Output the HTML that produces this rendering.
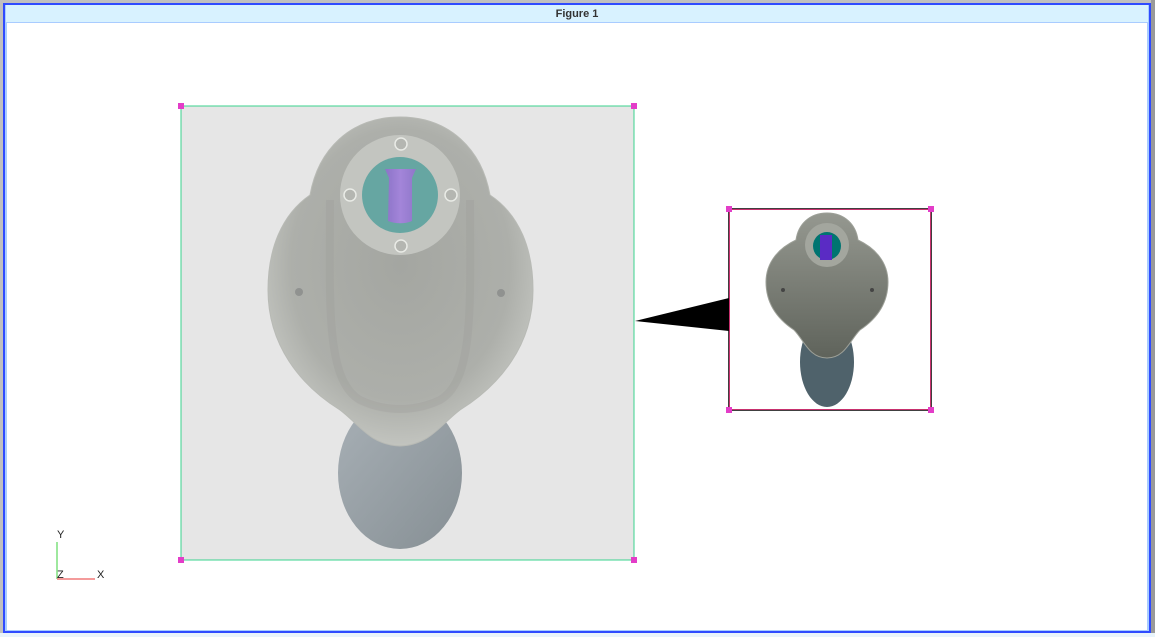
<!DOCTYPE html>
<html><head><meta charset="utf-8"><style>
html,body{margin:0;padding:0;width:1155px;height:637px;overflow:hidden;background:#c8c8c8}
svg{display:block}
text{font-family:"Liberation Sans",sans-serif}
</style></head><body>
<svg width="1155" height="637" viewBox="0 0 1155 637" xmlns="http://www.w3.org/2000/svg">
<defs>
<radialGradient id="body" cx="50%" cy="45%" r="55%">
<stop offset="0" stop-color="#a4a6a1"/><stop offset="0.75" stop-color="#adafaa"/><stop offset="1" stop-color="#c2c4bf"/></radialGradient>
<linearGradient id="fin" x1="0" y1="0" x2="1" y2="1"><stop offset="0" stop-color="#a8b0b6"/><stop offset="1" stop-color="#868f94"/></linearGradient>
<linearGradient id="pur" x1="0" x2="1"><stop offset="0" stop-color="#8b73c7"/><stop offset="0.5" stop-color="#a385d9"/><stop offset="1" stop-color="#8f77c9"/></linearGradient>
<linearGradient id="sb" x1="0" y1="0" x2="0" y2="1"><stop offset="0" stop-color="#959890"/><stop offset="1" stop-color="#5f635b"/></linearGradient>
</defs>
<rect x="0" y="0" width="1155" height="637" fill="#c0c0c0"/>
<rect x="3" y="3" width="1148" height="630" fill="#2f4bff"/>
<rect x="5" y="5" width="1144" height="626" fill="#a9ccff"/>
<rect x="6" y="5" width="1142" height="17" fill="#d8f2ff"/>
<rect x="6" y="22" width="1142" height="1" fill="#a9ccff"/>
<rect x="7" y="23" width="1140" height="607" fill="#ffffff"/>
<rect x="1151" y="0" width="4" height="637" fill="#9a9a9a"/>
<rect x="0" y="633" width="1155" height="4" fill="#e9f4fb"/>
<text x="577" y="17" font-size="11" font-weight="bold" fill="#333" text-anchor="middle">Figure 1</text>

<rect x="181" y="106" width="453" height="454" fill="#e6e6e6" stroke="#3ad38e" stroke-width="1"/>
<ellipse cx="400" cy="473" rx="62" ry="76" fill="url(#fin)"/>
<path d="M400 117 C450 117 482 150 490 195 C520 215 533 250 533 290 C533 345 500 385 460 410 C440 425 430 445 400 446 C370 445 360 425 340 410 C300 385 268 345 268 290 C268 250 281 215 310 195 C318 150 350 117 400 117 Z" fill="url(#body)" stroke="#b8bab5"/>
<path d="M330 200 C330 300 325 380 360 400 C385 412 415 412 440 400 C475 380 470 300 470 200" fill="none" stroke="#9a9c97" stroke-width="8" opacity="0.3"/>
<circle cx="400" cy="195" r="60" fill="#c3c5c0"/>
<circle cx="400" cy="195" r="38" fill="#66a6a2"/>
<path d="M385 169 L416 169 L412 178 L412 221 C405 224 396 224 388 221 L389 178 Z" fill="url(#pur)"/>
<g fill="#b4b6b1" stroke="#e9ebe6" stroke-width="1.5"><circle cx="401" cy="144" r="6"/><circle cx="401" cy="246" r="6"/><circle cx="350" cy="195" r="6"/><circle cx="451" cy="195" r="6"/></g>
<circle cx="299" cy="292" r="4" fill="#909290"/><circle cx="501" cy="293" r="4" fill="#909290"/>
<g fill="#e33dc8"><rect x="178" y="103" width="6" height="6"/><rect x="631" y="103" width="6" height="6"/><rect x="178" y="557" width="6" height="6"/><rect x="631" y="557" width="6" height="6"/></g>

<polygon points="635,321 729,298 729,331" fill="#000"/>
<rect x="729" y="209" width="202" height="201" fill="#fff" stroke="#000" stroke-width="1.5"/>
<rect x="729.5" y="209.5" width="201" height="200" fill="none" stroke="#c8306e" stroke-width="1"/>
<ellipse cx="827" cy="362" rx="27" ry="45" fill="#4f626b"/>
<path d="M827 213 C845 213 856 225 858 240 C875 248 888 262 888 282 C888 305 875 320 860 330 C850 340 845 358 827 358 C809 358 804 340 794 330 C779 320 766 305 766 282 C766 262 779 248 796 240 C798 225 809 213 827 213 Z" fill="url(#sb)" stroke="#9da098"/>
<circle cx="827" cy="245" r="22" fill="#a3a69e"/>
<circle cx="827" cy="246" r="14" fill="#007471"/>
<rect x="820" y="235" width="12" height="25" fill="#5a2bc4"/>
<g fill="#e33dc8"><rect x="726" y="206" width="6" height="6"/><rect x="928" y="206" width="6" height="6"/><rect x="726" y="407" width="6" height="6"/><rect x="928" y="407" width="6" height="6"/></g>
<circle cx="783" cy="290" r="2" fill="#444"/><circle cx="872" cy="290" r="2" fill="#444"/>

<line x1="57" y1="542" x2="57" y2="579" stroke="#7ee07e" stroke-width="1.5"/>
<line x1="57" y1="579" x2="95" y2="579" stroke="#f07a7a" stroke-width="1.5"/>
<text x="57" y="538" font-size="11" fill="#222">Y</text>
<text x="57" y="578" font-size="11" fill="#222">Z</text>
<text x="97" y="578" font-size="11" fill="#222">X</text>
</svg>
</body></html>
